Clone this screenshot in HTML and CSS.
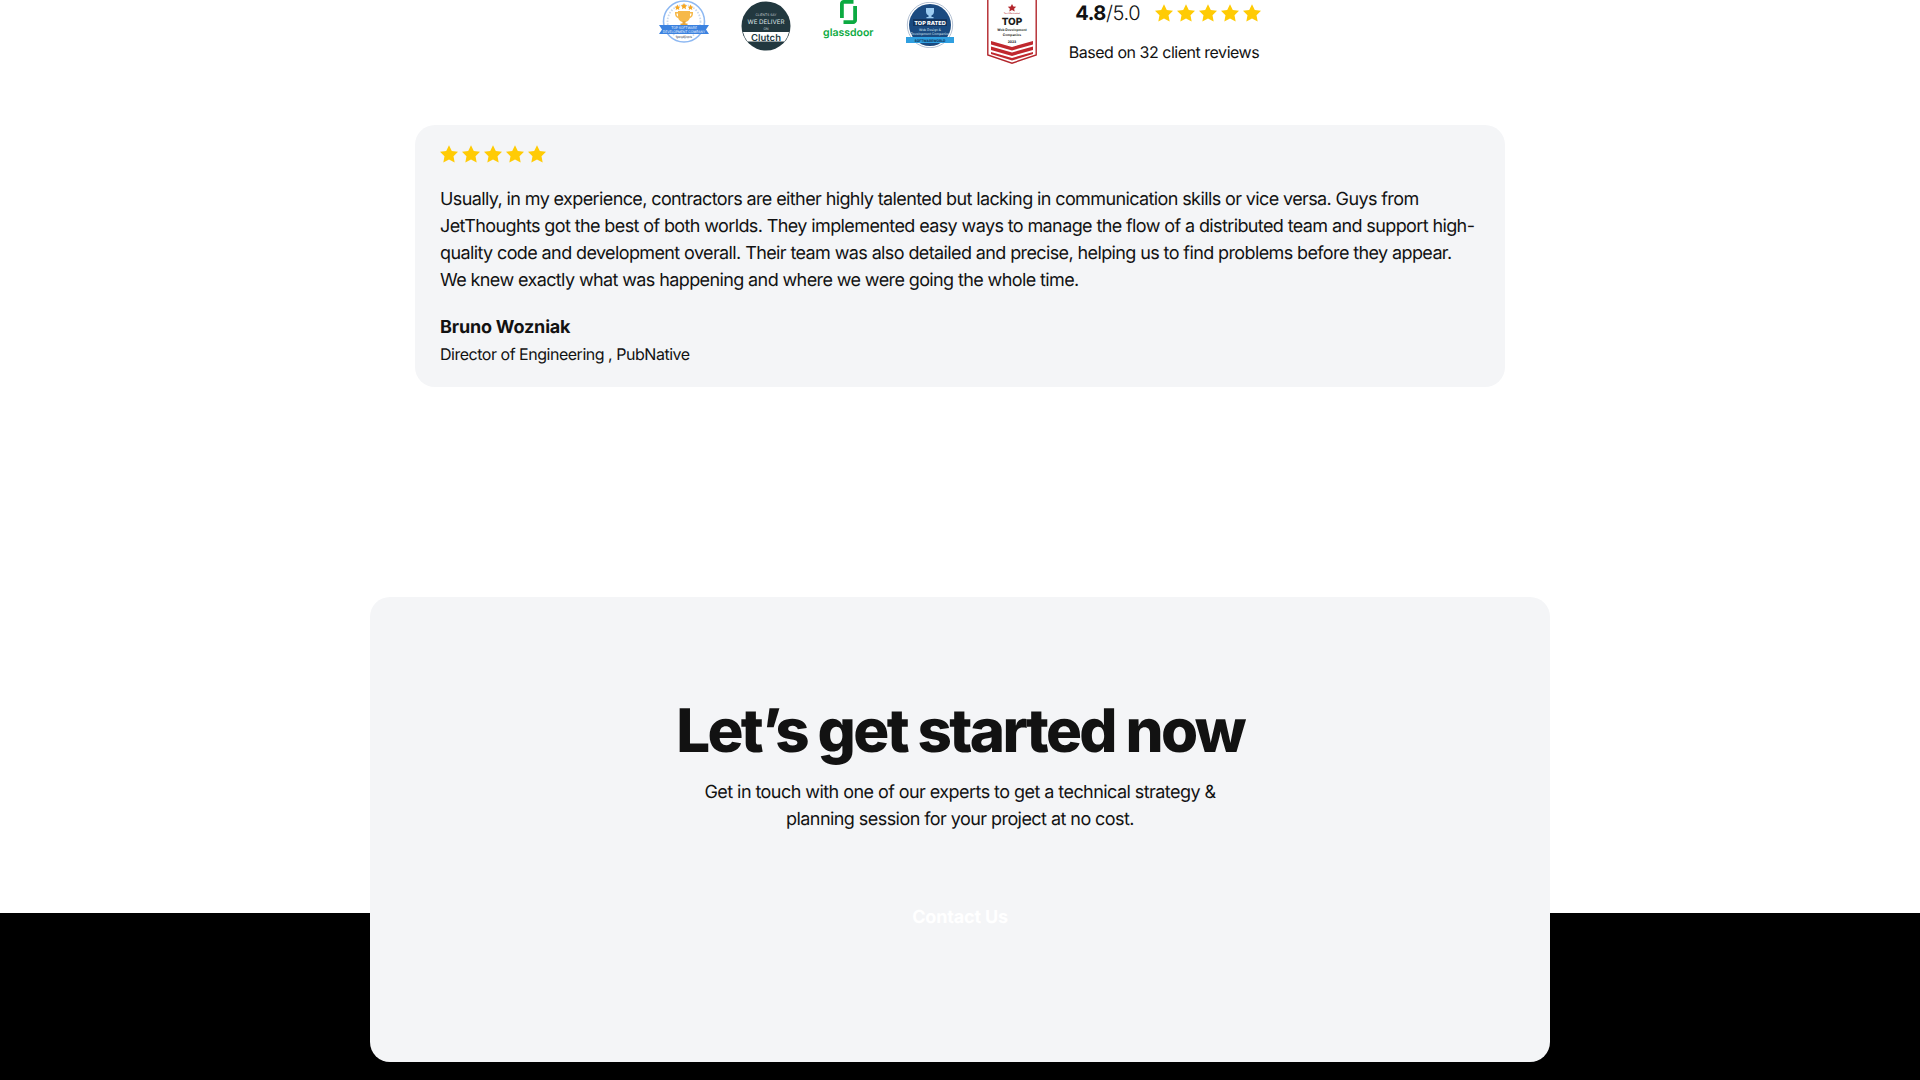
FILE: index.html
```html
<!DOCTYPE HTML>
<html>
<head>
	<meta charset="utf-8">
	<title>JetThoughts</title>
	<link rel="stylesheet" href="styles.css">
</head>
<body>
	<svg class="defs" width="0" height="0">
		<symbol id="star" viewBox="0 0 20 20">
			<path d="M10 .2l3.100 6.500 6.900.9-5 4.800 1.300 7L10 16l-6.300 3.400 1.300-7-5-4.800 6.900-.9z"/>
		</symbol>
	</svg>

	<section class="awards">
		<div class="badges">
			<svg class="badge-goodfirms" viewBox="0 0 50 44">
				<circle cx="25" cy="21.500" r="20.500" fill="#fff" stroke="#8db8f2" stroke-width="1.600"/>
				<circle cx="25" cy="21.500" r="16.500" fill="none" stroke="#c9d9ee" stroke-width="1.800" stroke-dasharray="1.500 1.500"/>
				<circle cx="25" cy="18" r="13" fill="#fff"/>
				<path d="M19 11h12v5c0 4-2.500 6-6 6s-6-2-6-6z" fill="#f6b94a"/>
				<path d="M16 12h3v1.500h-1.500c0 2 .7 3 2.500 3.500l-.5 1.300c-2.500-.7-3.500-2.500-3.500-4.800zM34 12h-3v1.500h1.500c0 2-.7 3-2.500 3.500l.5 1.300c2.500-.7 3.500-2.500 3.500-4.800z" fill="#f6b94a"/>
				<path d="M23.500 21h3v2.500h2v1.500h-7v-1.500h2z" fill="#e8a63a"/>
				<path d="M18.500 4.500l.9 1.900 2 .3-1.500 1.400.4 2-1.800-1-1.800 1 .4-2-1.500-1.400 2-.3zM25 3l1 2.100 2.200.3-1.600 1.600.4 2.200-2-1.100-2 1.100.4-2.200-1.600-1.600 2.200-.3zM31.500 4.500l.9 1.900 2 .3-1.500 1.400.4 2-1.800-1-1.800 1 .4-2-1.500-1.400 2-.3z" fill="#f5a623"/>
				<path d="M0 25h50l-3 4.500 3 4.500H0l3-4.500z" fill="#3b82e0"/>
				<text x="25" y="29" class="badge-tiny" fill="#eaf2fd">TOP SOFTWARE</text>
				<text x="25" y="32.800" class="badge-tiny" fill="#eaf2fd">DEVELOPMENT COMPANY</text>
				<text x="25" y="37.500" class="badge-tiny" fill="#444">goodfirms</text>
			</svg>
			<svg class="badge-clutch" viewBox="0 0 50 50">
				<circle cx="25" cy="25" r="24.500" fill="#22383f"/>
				<path d="M2 31h46a24 24 0 0 1-4.500 9.500h-37A24 24 0 0 1 2 31z" fill="#fff"/>
				<text x="25" y="14.500" class="badge-tiny" fill="#c6d0d3">CLIENTS SAY</text>
				<text x="25" y="22.500" class="badge-mid" fill="#dfe5e7">WE DELIVER</text>
				<text x="25" y="28.500" class="badge-tiny" fill="#c6d0d3">ON</text>
				<text x="25" y="39.500" class="badge-clutch-name" fill="#22383f">Clutch</text>
			</svg>
			<div class="badge-glassdoor">
				<svg viewBox="0 0 17 24" width="17" height="24">
					<path d="M13.500 0H3.700C1.700 0 0 1.700 0 3.700v14.300h3.800V3.800h9.700zM3.500 24h9.800c2 0 3.700-1.700 3.700-3.700V6h-3.800v14.200H3.500z" fill="#0caa41"/>
				</svg>
				<span>glassdoor</span>
			</div>
			<svg class="badge-softwareworld" viewBox="0 0 48 46">
				<circle cx="24" cy="23" r="22.700" fill="#fff" stroke="#9fb0c6" stroke-width=".8"/>
				<circle cx="24" cy="23" r="21" fill="#1a4a80"/>
				<path d="M20 6h8v3.500c0 2.500-1.500 4-4 4s-4-1.500-4-4z" fill="#9ccbf0"/>
				<path d="M22.500 13h3v2h2v1.300h-7v-1.300h2z" fill="#9ccbf0"/>
				<rect x="7" y="17" width="34" height="7" fill="#12345e"/>
				<text x="24" y="22.700" class="badge-mid badge-rated" fill="#fff">TOP RATED</text>
				<text x="24" y="28.500" class="badge-tiny" fill="#d6e4f2">Web Design &amp;</text>
				<text x="24" y="32.700" class="badge-tiny" fill="#d6e4f2">Development Companies</text>
				<path d="M0 35h48v6H0z" fill="#2f9fe0"/>
				<text x="24" y="39.500" class="badge-tiny badge-strong" fill="#0d2c50">SOFTWAREWORLD</text>
			</svg>
			<svg class="badge-shield" viewBox="0 0 50 64">
				<path d="M.8-2h48.400v57L25 63.200.8 55z" fill="#fff" stroke="#b3262c" stroke-width="1.400"/>
				<path d="M25 4l1.300 2.500 2.900.3-2.100 1.900.6 2.800L25 10.100l-2.700 1.400.6-2.800-2.100-1.900 2.900-.3z" fill="#b3262c"/>
				<text x="25" y="14" class="badge-micro" fill="#b3262c">TechReviewer</text>
				<text x="25" y="25" class="badge-top" fill="#1b1b1b">TOP</text>
				<text x="25" y="30.500" class="badge-tiny badge-strong" fill="#1b1b1b">Web Development</text>
				<text x="25" y="35.500" class="badge-tiny badge-strong" fill="#1b1b1b">Companies</text>
				<text x="25" y="42.500" class="badge-tiny badge-strong" fill="#1b1b1b">2023</text>
				<path d="M4 41l21 6 21-6v3.500l-21 6-21-6zM4 46.500l21 6 21-6V50l-21 6-21-6zM4 52l21 6 21-6v2l-21 6.500L4 54z" fill="#c0282e"/>
			</svg>
		</div>
		<div class="rating">
			<div class="rating-top">
				<span class="score"><b>4.8</b>/5.0</span>
				<div class="stars">
					<svg><use href="#star"/></svg>
					<svg><use href="#star"/></svg>
					<svg><use href="#star"/></svg>
					<svg><use href="#star"/></svg>
					<svg><use href="#star"/></svg>
				</div>
			</div>
			<p class="rating-note">Based on 32 client reviews</p>
		</div>
	</section>

	<section class="review">
		<div class="stars">
			<svg><use href="#star"/></svg>
			<svg><use href="#star"/></svg>
			<svg><use href="#star"/></svg>
			<svg><use href="#star"/></svg>
			<svg><use href="#star"/></svg>
		</div>
		<p class="review-text">Usually, in my experience, contractors are either highly talented but lacking in communication skills or vice versa. Guys from JetThoughts got the best of both worlds. They implemented easy ways to manage the flow of a distributed team and support high-quality code and development overall. Their team was also detailed and precise, helping us to find problems before they appear. We knew exactly what was happening and where we were going the whole time.</p>
		<p class="review-name">Bruno Wozniak</p>
		<p class="review-role">Director of Engineering , PubNative</p>
	</section>

	<section class="cta">
		<h2>Let’s get started now</h2>
		<p>Get in touch with one of our experts to get a technical strategy &amp;<br>planning session for your project at no cost.</p>
		<a class="cta-link" href="#">Contact Us</a>
	</section>

	<footer></footer>
</body>
</html>
```

FILE: styles.css
```css
html, body {
	margin: 0;
	height: 1080px;
	overflow: hidden;
	background-color: #fff;
}
body {
	font-family: Inter, "Liberation Sans", sans-serif;
	color: #121212;
	text-rendering: geometricPrecision;
}
p {
	margin: 0;
}
.defs {
	display: block;
	height: 0;
}

/* awards row, its top is cut off by the scroll position */
.awards {
	display: flex;
	justify-content: center;
	align-items: flex-start;
	gap: 32px;
	height: 125px;
	padding-right: 2px;
	box-sizing: border-box;
}
.badges {
	display: flex;
	align-items: flex-start;
	gap: 32px;
}
.badge-goodfirms {
	width: 50px;
	height: 44px;
}
.badge-clutch {
	width: 50px;
	height: 50px;
	margin-top: 1px;
}
.badge-glassdoor {
	display: flex;
	flex-direction: column;
	align-items: center;
	width: 51px;
	color: #0caa41;
	font-size: 10.500px;
	font-weight: 600;
	line-height: 14px;
}
.badge-glassdoor svg {
	display: block;
	margin-bottom: 2px;
}
.badge-softwareworld {
	width: 48px;
	height: 46px;
	margin-top: 2px;
}
.badge-shield {
	width: 50px;
	height: 64px;
	margin-left: 1px;
}
.badge-tiny {
	font-size: 3.300px;
	text-anchor: middle;
}
.badge-micro {
	font-size: 2.500px;
	text-anchor: middle;
}
.badge-strong {
	font-weight: 700;
}
.badge-mid {
	font-size: 6.200px;
	font-weight: 400;
	text-anchor: middle;
}
.badge-rated {
	font-size: 5.600px;
	font-weight: 800;
}
.badge-clutch-name {
	font-size: 9.500px;
	font-weight: 600;
	text-anchor: middle;
}
.badge-top {
	font-size: 10px;
	font-weight: 800;
	text-anchor: middle;
}

.rating-top {
	display: flex;
	align-items: center;
	justify-content: flex-end;
	gap: 15px;
	height: 26px;
	margin-right: -2px;
}
.score {
	font-size: 20px;
	font-weight: 300;
	letter-spacing: -0.02em;
}
.score b {
	font-weight: 700;
}
.rating-note {
	margin-top: 14px;
	font-size: 16px;
	line-height: 24px;
	letter-spacing: -0.03em;
}
.stars {
	display: flex;
	gap: 4px;
}
.stars svg {
	width: 18px;
	height: 18px;
	fill: #ffcb05;
}

.review {
	box-sizing: border-box;
	width: 1090px;
	height: 262px;
	margin: 0 auto 210px;
	padding: 20px 28px 20px 25px;
	background-color: #f4f5f7;
	border-radius: 20px;
}
.review-text {
	margin-top: 23px;
	font-size: 18px;
	line-height: 27px;
	letter-spacing: -0.034em;
}
.review-name {
	margin-top: 20px;
	font-size: 18px;
	font-weight: 700;
	line-height: 27px;
	letter-spacing: -0.01em;
}
.review-role {
	margin-top: 1px;
	font-size: 16px;
	line-height: 24px;
	letter-spacing: -0.03em;
}

.cta {
	position: relative;
	box-sizing: border-box;
	width: 1180px;
	height: 465px;
	margin: 0 auto;
	padding-top: 95px;
	background-color: #f4f5f7;
	border-radius: 20px;
	text-align: center;
}
.cta h2 {
	margin: 0;
	font-size: 60px;
	font-weight: 800;
	line-height: 78px;
	letter-spacing: -0.044em;
}
.cta p {
	margin-top: 9px;
	font-size: 18px;
	line-height: 27px;
	letter-spacing: -0.031em;
}
.cta-link {
	display: block;
	margin-top: 71px;
	color: #fff;
	font-size: 18px;
	font-weight: 700;
	line-height: 27px;
	letter-spacing: -0.01em;
	text-decoration: none;
}

footer {
	height: 167px;
	margin-top: -149px;
	background-color: #000;
}
```
